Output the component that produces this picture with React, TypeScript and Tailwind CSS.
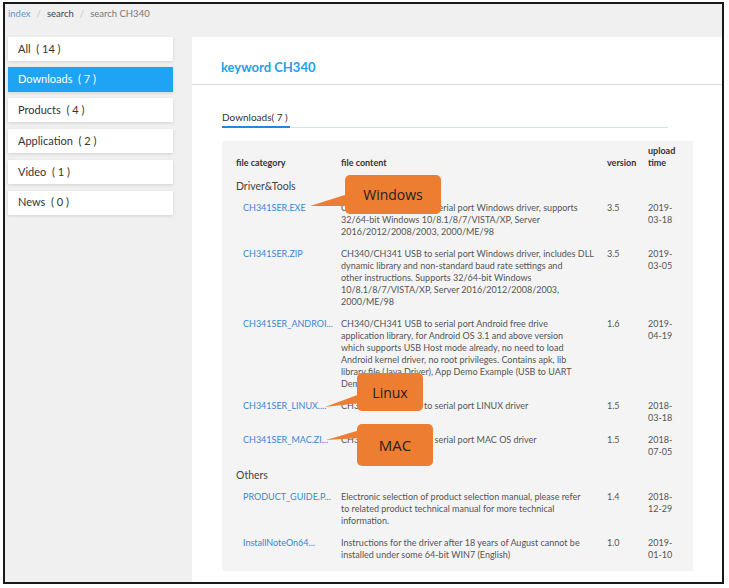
import React from 'react';

type Row = { name: string; lines: string[]; version: string; time: [string, string] };
type Group = { title: string; rows: Row[] };

const groups: Group[] = [
  {
    title: 'Driver&Tools',
    rows: [
      {
        name: 'CH341SER.EXE',
        lines: [
          'CH340/CH341 USB to serial port Windows driver, supports',
          '32/64-bit Windows 10/8.1/8/7/VISTA/XP, Server',
          '2016/2012/2008/2003, 2000/ME/98',
        ],
        version: '3.5',
        time: ['2019-', '03-18'],
      },
      {
        name: 'CH341SER.ZIP',
        lines: [
          'CH340/CH341 USB to serial port Windows driver, includes DLL',
          'dynamic library and non-standard baud rate settings and',
          'other instructions. Supports 32/64-bit Windows',
          '10/8.1/8/7/VISTA/XP, Server 2016/2012/2008/2003,',
          '2000/ME/98',
        ],
        version: '3.5',
        time: ['2019-', '03-05'],
      },
      {
        name: 'CH341SER_ANDROI...',
        lines: [
          'CH340/CH341 USB to serial port Android free drive',
          'application library, for Android OS 3.1 and above version',
          'which supports USB Host mode already, no need to load',
          'Android kernel driver, no root privileges. Contains apk, lib',
          'library file (Java Driver), App Demo Example (USB to UART',
          'Demo SDK)',
        ],
        version: '1.6',
        time: ['2019-', '04-19'],
      },
      {
        name: 'CH341SER_LINUX....',
        lines: ['CH340/CH341 USB to serial port LINUX driver'],
        version: '1.5',
        time: ['2018-', '03-18'],
      },
      {
        name: 'CH341SER_MAC.ZI...',
        lines: ['CH340/CH341 USB to serial port MAC OS driver'],
        version: '1.5',
        time: ['2018-', '07-05'],
      },
    ],
  },
  {
    title: 'Others',
    rows: [
      {
        name: 'PRODUCT_GUIDE.P...',
        lines: [
          'Electronic selection of product selection manual, please refer',
          'to related product technical manual for more technical',
          'information.',
        ],
        version: '1.4',
        time: ['2018-', '12-29'],
      },
      {
        name: 'InstallNoteOn64...',
        lines: [
          'Instructions for the driver after 18 years of August cannot be',
          'installed under some 64-bit WIN7 (English)',
        ],
        version: '1.0',
        time: ['2019-', '01-10'],
      },
    ],
  },
];

const sideItems = [
  { label: 'All', count: 14 },
  { label: 'Downloads', count: 7 },
  { label: 'Products', count: 4 },
  { label: 'Application', count: 2 },
  { label: 'Video', count: 1 },
  { label: 'News', count: 0 },
];

const SideMenu: React.FC = () => (
  <div className='w-[187px] pl-[3px] flex flex-col gap-[6.6px]'>
    {sideItems.map((item) => {
      const active = item.label === 'Downloads';
      return (
        <div
          key={item.label}
          className={`w-[165px] h-[24.2px] flex items-center pl-[10px] text-[11px] shadow-[0_1px_3px_rgba(0,0,0,0.13)] ${active ? 'bg-[#1fa3f5] text-white' : 'bg-white text-[#333]'}`}
        >
          {item.label}&nbsp;&nbsp;( {item.count} )
        </div>
      );
    })}
  </div>
);

const FileTable: React.FC = () => (
  <div className='w-[471px] bg-[#f4f4f4] pl-[14px] pt-[4px] pb-[5px] text-[9px] leading-[12px] text-[#555]'>
    <div className='grid grid-cols-[105px_266px_41px_1fr] items-end pb-[5px] font-bold text-[#333]'>
      <div>file category</div>
      <div>file content</div>
      <div>version</div>
      <div>
        upload
        <br />
        time
      </div>
    </div>
    {groups.map((g) => (
      <div key={g.title}>
        <div className='pt-[5px] pb-[4px] text-[10.5px] leading-[14px] text-[#444]'>{g.title}</div>
        {g.rows.map((r) => (
          <div key={r.name} className='grid grid-cols-[105px_266px_41px_1fr] py-[5px]'>
            <div className='pl-[7px] text-[#3a86d2] whitespace-nowrap'>{r.name}</div>
            <div className='whitespace-nowrap'>
              {r.lines.map((l, i) => (
                <div key={i}>{l}</div>
              ))}
            </div>
            <div>{r.version}</div>
            <div>
              {r.time[0]}
              <br />
              {r.time[1]}
            </div>
          </div>
        ))}
      </div>
    ))}
  </div>
);

const Callouts: React.FC = () => (
  <div style={{ fontFamily: '"Open Sans", "Noto Sans", sans-serif' }}>
    <svg className='absolute left-0 top-0 pointer-events-none' width='729' height='588'>
      <polygon points='348,194 310,206 348,206' fill='#ed7d31' />
      <polygon points='360,394 325,407 360,403' fill='#ed7d31' />
      <polygon points='360,430 326,440 360,438' fill='#ed7d31' />
    </svg>
    <div className='absolute left-[345px] top-[175px] w-[96px] h-[39px] rounded-[5px] bg-[#ed7d31] flex items-center justify-center text-[14px] text-[#222]'>
      Windows
    </div>
    <div className='absolute left-[357px] top-[373px] w-[66px] h-[38px] rounded-[5px] bg-[#ed7d31] flex items-center justify-center text-[14px] text-[#222]'>
      Linux
    </div>
    <div className='absolute left-[357px] top-[424px] w-[76px] h-[42px] rounded-[5px] bg-[#ed7d31] flex items-center justify-center text-[15px] text-[#222]'>
      MAC
    </div>
  </div>
);

export default function App() {
  return (
    <div className='relative w-[729px] h-[588px] bg-white overflow-hidden' style={{ fontFamily: 'Lato, "Noto Sans", sans-serif' }}>
      <div className='ml-[3px] mt-[2px] w-[721px] h-[582px] border-2 border-[#1a1a1a] bg-[#f0f0f0] flex flex-col overflow-hidden'>
        <div className='h-[32.7px] shrink-0 pl-[3px] pt-[4px] text-[9.5px] leading-[12px] flex gap-[6px]'>
          <span className='text-[#6d95c4]'>index</span>
          <span className='text-[#c4c4c4]'>/</span>
          <span className='text-[#444]'>search</span>
          <span className='text-[#c4c4c4]'>/</span>
          <span className='text-[#777]'>search CH340</span>
        </div>
        <div className='flex flex-1'>
          <SideMenu />
          <div className='flex-1 bg-white'>
            <div className='h-[48px] pl-[29px] pt-[22px] border-b border-[#dcdcdc]'>
              <div className='text-[13px] leading-[16px] font-bold text-[#1e9fe8]'>keyword CH340</div>
            </div>
            <div className='pl-[30px]'>
              <div className='w-[446px] mt-[26px] border-b border-[#cfe2f4] flex'>
                <div className='border-b-2 border-[#2a84d8] -mb-px pb-[3px] pr-[2px] text-[10px] leading-[12px] text-[#333]'>
                  Downloads( 7 )
                </div>
              </div>
              <div className='mt-[13px]'>
                <FileTable />
              </div>
            </div>
          </div>
        </div>
      </div>
      <Callouts />
    </div>
  );
}
